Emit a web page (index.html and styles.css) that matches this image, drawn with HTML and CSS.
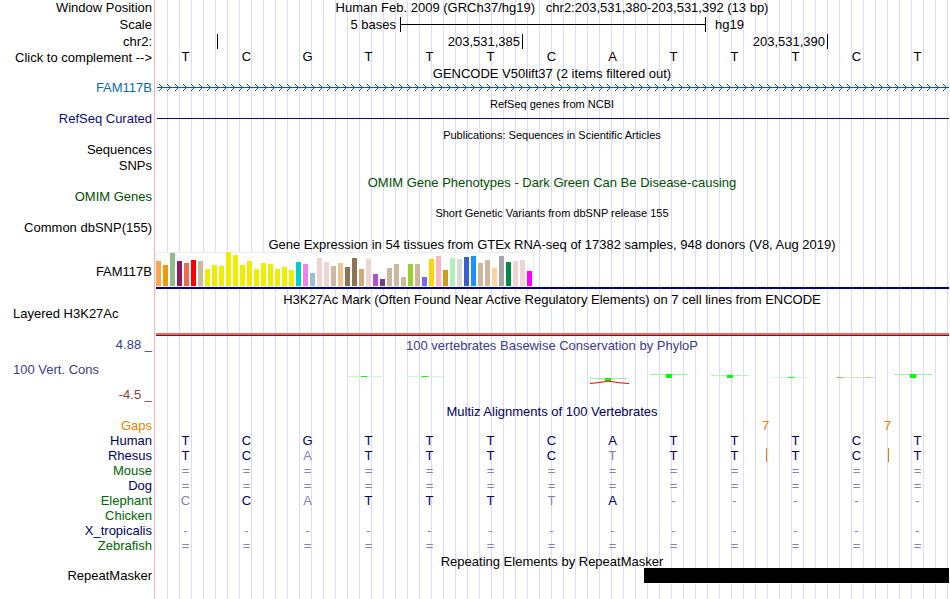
FILE: index.html
```html
<!DOCTYPE html>
<html lang="en">
<head>
<meta charset="utf-8">
<title>chr2:203,531,380-203,531,392</title>
<link rel="stylesheet" href="styles.css">
</head>
<body>
<main class="browser">
  <header>
    <div class="row row-position"><span class="label">Window Position</span><h1 class="title">Human Feb. 2009 (GRCh37/hg19) &nbsp; chr2:203,531,380-203,531,392 (13 bp)</h1></div>
    <div class="row row-scale"><span class="label">Scale</span>
      <div class="ruler"><span class="scale-from">5 bases</span><span class="scale-bar"></span><span class="scale-to">hg19</span></div>
    </div>
    <div class="row row-ruler"><span class="label">chr2:</span>
      <div class="ruler"><span class="tick tick-1"></span><span class="coord coord-5">203,531,385</span><span class="tick tick-5"></span><span class="coord coord-10">203,531,390</span><span class="tick tick-10"></span></div>
    </div>
    <div class="row"><a class="label" href="#complement">Click to complement --&gt;</a>
      <div class="bases"><span>T</span><span>C</span><span>G</span><span>T</span><span>T</span><span>T</span><span>C</span><span>A</span><span>T</span><span>T</span><span>T</span><span>C</span><span>T</span></div>
    </div>
  </header>

  <section>
    <div class="row"><h2 class="title">GENCODE V50lift37 (2 items filtered out)</h2></div>
    <div class="row"><a class="label gencode" href="#gencode">FAM117B</a>
      <svg class="gene" height="15" aria-hidden="true">
        <defs><pattern id="strand" x="0" y="0" width="8" height="15" patternUnits="userSpaceOnUse"><path class="chevron" d="M2 4h1v1h1v1h1v1h1v1h-1v1h-1v1h-1v1h-1v-1h1v-1h1v-1h1v-1h-1v-1h-1v-1h-1z"/></pattern></defs>
        <rect width="100%" height="15" fill="url(#strand)"/>
        <rect class="intron" y="7" width="100%" height="1"/>
      </svg>
    </div>
  </section>

  <section>
    <div class="row"><h2 class="title small">RefSeq genes from NCBI</h2></div>
    <div class="row"><a class="label refseq" href="#refseq">RefSeq Curated</a><div class="refseq-line"></div></div>
  </section>

  <section>
    <div class="row"><h2 class="title small">Publications: Sequences in Scientific Articles</h2></div>
    <div class="row row-spaced"><a class="label" href="#sequences">Sequences</a></div>
    <div class="row"><a class="label" href="#snps">SNPs</a></div>
  </section>

  <section>
    <div class="row"><h2 class="title omim">OMIM Gene Phenotypes - Dark Green Can Be Disease-causing</h2></div>
    <div class="row"><a class="label omim" href="#omim">OMIM Genes</a></div>
  </section>

  <section>
    <div class="row"><h2 class="title small">Short Genetic Variants from dbSNP release 155</h2></div>
    <div class="row"><a class="label" href="#dbsnp">Common dbSNP(155)</a></div>
  </section>

  <section>
    <div class="row"><h2 class="title">Gene Expression in 54 tissues from GTEx RNA-seq of 17382 samples, 948 donors (V8, Aug 2019)</h2></div>
    <div class="row row-gtex"><a class="label" href="#gtex">FAM117B</a>
      <div class="gtex">
        <svg width="378" height="36" role="img" aria-label="Expression by tissue">
          <rect class="frame" x="0.5" y="1.5" width="377" height="34"/>
          <rect x="0" y="10" width="5" height="25" fill="#ffa54f"/><rect x="7" y="14" width="5" height="21" fill="#ee9a00"/><rect x="14" y="2" width="5" height="33" fill="#8fbc8f"/><rect x="21" y="10" width="5" height="25" fill="#8b1c62"/><rect x="28" y="12" width="5" height="23" fill="#ee6a50"/><rect x="35" y="9" width="5" height="26" fill="#ff0000"/><rect x="42" y="10" width="5" height="25" fill="#cdb79e"/>
          <g fill="#eeee00"><rect x="49" y="18" width="5" height="17"/><rect x="56" y="14" width="5" height="21"/><rect x="63" y="15" width="5" height="20"/><rect x="70" y="1" width="5" height="34"/><rect x="77" y="4" width="5" height="31"/><rect x="84" y="14" width="5" height="21"/><rect x="91" y="10" width="5" height="25"/><rect x="98" y="18" width="5" height="17"/><rect x="105" y="12" width="5" height="23"/><rect x="112" y="13" width="5" height="22"/><rect x="119" y="18" width="5" height="17"/><rect x="126" y="16" width="5" height="19"/><rect x="133" y="19" width="5" height="16"/></g>
          <rect x="140" y="11" width="5" height="24" fill="#00cdcd"/><rect x="147" y="13" width="5" height="22" fill="#ee82ee"/><rect x="154" y="22" width="5" height="13" fill="#9ac0cd"/><rect x="161" y="7" width="5" height="28" fill="#eed5d2"/><rect x="168" y="11" width="5" height="24" fill="#eed5d2"/><rect x="175" y="15" width="5" height="20" fill="#cdb79e"/><rect x="182" y="12" width="5" height="23" fill="#eec591"/><rect x="189" y="16" width="5" height="19" fill="#8b7355"/><rect x="196" y="7" width="5" height="28" fill="#8b7355"/><rect x="203" y="18" width="5" height="17" fill="#cdaa7d"/><rect x="210" y="8" width="5" height="27" fill="#eed5d2"/><rect x="217" y="23" width="5" height="12" fill="#b452cd"/><rect x="224" y="28" width="5" height="7" fill="#7a378b"/><rect x="231" y="17" width="5" height="18" fill="#cdb79e"/><rect x="238" y="13" width="5" height="22" fill="#cdb79e"/><rect x="245" y="26" width="5" height="9" fill="#cdb79e"/><rect x="252" y="13" width="5" height="22" fill="#9acd32"/><rect x="259" y="13" width="5" height="22" fill="#cdb79e"/><rect x="266" y="26" width="5" height="9" fill="#7a67ee"/><rect x="273" y="8" width="5" height="27" fill="#ffd700"/><rect x="280" y="5" width="5" height="30" fill="#ffb6c1"/><rect x="287" y="19" width="5" height="16" fill="#cd9b1d"/><rect x="294" y="7" width="5" height="28" fill="#b4eeb4"/><rect x="301" y="8" width="5" height="27" fill="#d9d9d9"/><rect x="308" y="6" width="5" height="29" fill="#3a5fcd"/><rect x="315" y="5" width="5" height="30" fill="#1e90ff"/><rect x="322" y="12" width="5" height="23" fill="#cdb79e"/><rect x="329" y="9" width="5" height="26" fill="#cdb79e"/><rect x="336" y="17" width="5" height="18" fill="#ffd39b"/><rect x="343" y="5" width="5" height="30" fill="#a6a6a6"/><rect x="350" y="11" width="5" height="24" fill="#008b45"/><rect x="357" y="10" width="5" height="25" fill="#eed5d2"/><rect x="364" y="9" width="5" height="26" fill="#eed5d2"/><rect x="371" y="20" width="5" height="15" fill="#ff00ff"/>
        </svg>
      </div>
    </div>
  </section>

  <section>
    <div class="row"><h2 class="title">H3K27Ac Mark (Often Found Near Active Regulatory Elements) on 7 cell lines from ENCODE</h2></div>
    <div class="row row-h3k"><a class="label label-left" href="#h3k27ac">Layered H3K27Ac</a><div class="h3k-signal"></div></div>
  </section>

  <section>
    <div class="row"><span class="label phylop">4.88 _</span><h2 class="title phylop">100 vertebrates Basewise Conservation by PhyloP</h2></div>
    <div class="row row-phylop">
      <div class="label phylop-labels"><a class="phylop label-start" href="#cons">100 Vert. Cons</a><span class="phylop-min">-4.5 _</span></div>
      <svg class="phylop-plot" viewBox="0 -2 794 50" height="50" preserveAspectRatio="none" role="img" aria-label="PhyloP scores">
        <g fill="#d2fad2"><rect x="191" y="22" width="36" height="1"/><rect x="252" y="22" width="36" height="1"/><rect x="617" y="23" width="37" height="1"/></g>
        <g fill="#96fa96"><rect x="435" y="24" width="36" height="1"/><rect x="495" y="20" width="38" height="1"/><rect x="739" y="20" width="38" height="1"/></g>
        <rect x="556" y="21" width="38" height="1" fill="#b4fab4"/>
        <g fill="#00ff00"><rect x="206" y="22" width="6" height="1"/><rect x="267" y="22" width="6" height="1"/><rect x="450" y="24" width="6" height="3"/><rect x="511" y="20" width="6" height="4"/><rect x="572" y="21" width="6" height="3"/><rect x="633" y="23" width="6" height="1"/><rect x="755" y="20" width="6" height="4"/></g>
        <path class="negative" d="M435 29.5L442 28.8L453 27.2L465 28.8L474 29.5"/>
        <rect x="681" y="23" width="38" height="1" fill="#dcdcbe"/><rect x="682" y="23" width="6" height="1" fill="#b4aa50"/><rect x="711" y="23" width="5" height="1" fill="#c8be82"/>
      </svg>
    </div>
  </section>

  <section class="multiz">
    <div class="row"><h2 class="title">Multiz Alignments of 100 Vertebrates</h2></div>
    <table class="alignment">
      <tr class="gaps"><th scope="row">Gaps</th><td></td><td></td><td></td><td></td><td></td><td></td><td></td><td></td><td></td><td></td><td><span class="insert">7</span></td><td></td><td><span class="insert">7</span></td></tr>
      <tr><th scope="row">Human</th><td>T</td><td>C</td><td>G</td><td>T</td><td>T</td><td>T</td><td>C</td><td>A</td><td>T</td><td>T</td><td>T</td><td>C</td><td>T</td></tr>
      <tr><th scope="row">Rhesus</th><td>T</td><td>C</td><td class="diff">A</td><td>T</td><td>T</td><td>T</td><td>C</td><td class="diff">T</td><td>T</td><td>T</td><td><span class="insert-mark"></span>T</td><td>C</td><td><span class="insert-mark"></span>T</td></tr>
      <tr class="green unaligned"><th scope="row">Mouse</th><td>=</td><td>=</td><td>=</td><td>=</td><td>=</td><td>=</td><td>=</td><td>=</td><td>=</td><td>=</td><td>=</td><td>=</td><td>=</td></tr>
      <tr class="unaligned"><th scope="row">Dog</th><td>=</td><td>=</td><td>=</td><td>=</td><td>=</td><td>=</td><td>=</td><td>=</td><td>=</td><td>=</td><td>=</td><td>=</td><td>=</td></tr>
      <tr class="green"><th scope="row">Elephant</th><td class="diff">C</td><td>C</td><td class="diff">A</td><td>T</td><td>T</td><td>T</td><td class="diff">T</td><td>A</td><td class="diff">-</td><td class="diff">-</td><td class="diff">-</td><td class="diff">-</td><td class="diff">-</td></tr>
      <tr class="green"><th scope="row">Chicken</th><td></td><td></td><td></td><td></td><td></td><td></td><td></td><td></td><td></td><td></td><td></td><td></td><td></td></tr>
      <tr class="unaligned"><th scope="row">X_tropicalis</th><td>-</td><td>-</td><td>-</td><td>-</td><td>-</td><td>-</td><td>-</td><td>-</td><td>-</td><td>-</td><td>-</td><td>-</td><td>-</td></tr>
      <tr class="green unaligned"><th scope="row">Zebrafish</th><td>=</td><td>=</td><td>=</td><td>=</td><td>=</td><td>=</td><td>=</td><td>=</td><td>=</td><td>=</td><td>=</td><td>=</td><td>=</td></tr>
    </table>
  </section>

  <section>
    <div class="row"><h2 class="title">Repeating Elements by RepeatMasker</h2></div>
    <div class="row"><a class="label" href="#rmsk">RepeatMasker</a><div class="ruler"><span class="repeat"></span></div></div>
  </section>
</main>
</body>
</html>
```
FILE: styles.css
```css
* { box-sizing: border-box; }

body {
  margin: 0;
  background: #fff;
  color: #000;
  font: 13px/15px "Liberation Sans", Arial, sans-serif;
}

a { color: inherit; text-decoration: none; }

/* Guide lines every 12px, with the pink rule beside the labels */
.browser {
  min-height: 100vh;
  padding-right: 1px;
  background:
    linear-gradient(#ffb0b0, #ffb0b0) 154px 0 / 1px 100% no-repeat,
    repeating-linear-gradient(90deg, #dcdcfa 0 1px, transparent 1px 12px) 167px 0 no-repeat;
}

section { padding-bottom: 1px; }

.row {
  display: grid;
  grid-template-columns: 155px minmax(0, 1fr);
  min-height: 15px;
}

.row-position { min-height: 16px; }
.row-scale { min-height: 18px; padding-top: 1px; align-items: start; }
.row-ruler { min-height: 16px; align-items: start; line-height: 16px; }
.row-spaced { min-height: 16px; }

.label {
  grid-column: 1;
  padding-right: 3px;
  text-align: right;
  white-space: nowrap;
}

.label-left { padding-left: 13px; text-align: left; }

.title {
  grid-column: 2;
  margin: 0;
  font-size: 13px;
  font-weight: normal;
  text-align: center;
  white-space: nowrap;
}

section .title { padding-top: 1px; margin-bottom: -1px; }

.small { font-size: 11px; }

.ruler {
  display: grid;
  grid-template-columns: repeat(13, 1fr);
  grid-template-rows: 15px;
  height: 15px;
  margin-left: 1px;
}

.ruler > * { grid-row: 1; }

.scale-from { grid-column: 1 / 5; padding-right: 4px; text-align: right; }

.scale-bar {
  grid-column: 5 / 10;
  margin-right: -1px;
  border: solid #000;
  border-width: 0 1px;
  background: linear-gradient(#000, #000) center / 100% 1px no-repeat;
}

.scale-to { grid-column: 10; padding-left: 10px; }

.tick { border-left: 1px solid #000; }
.tick-1 { grid-column: 2; }
.tick-5 { grid-column: 7; }
.tick-10 { grid-column: 12; }

.coord { padding-right: 2px; text-align: right; }
.coord-5 { grid-column: 1 / 7; }
.coord-10 { grid-column: 7 / 12; }

.bases {
  display: grid;
  grid-template-columns: repeat(13, 1fr);
  padding-right: 1px;
  line-height: 13px;
  text-align: center;
}

.gencode { color: #0c6caa; }
.gene { display: block; width: calc(100% - 2px); margin-left: 2px; }
.intron, .chevron { fill: #0c5a8c; }

.refseq { color: #0c0c78; }
.refseq-line {
  align-self: center;
  height: 1px;
  margin-left: 2px;
  background: #0c0c78;
}

.omim { color: #005000; }

.row-gtex { min-height: 39px; }
.row-gtex .label { align-self: center; padding-top: 1px; }
.gtex { height: 38px; margin-left: 1px; border-bottom: 2px solid #000080; }
.gtex svg { display: block; }
.frame { fill: #fff; stroke: #eee; }

.row-h3k { min-height: 30px; }
.h3k-signal {
  align-self: end;
  height: 3px;
  margin-left: 1px;
  background: #ff6450;
  border-bottom: 1px solid #641432;
}

.phylop { color: #3c3c8c; }
.phylop-min { color: #8c3c3c; }
.row-phylop { min-height: 50px; }
.phylop-labels {
  display: flex;
  flex-direction: column;
  gap: 10px;
  padding-top: 10px;
}
.label-start { padding-left: 13px; text-align: left; }
.phylop-plot { display: block; width: 100%; }
.negative { fill: none; stroke: #ff0000; stroke-width: 1; }

.multiz { padding-bottom: 0; color: #000064; }

.alignment {
  width: calc(100% - 1px);
  table-layout: fixed;
  border-collapse: collapse;
}

.alignment th {
  width: 155px;
  padding: 0 3px 0 0;
  font-weight: normal;
  text-align: right;
}

.alignment td {
  position: relative;
  height: 15px;
  padding: 0;
  text-align: center;
}

.green th { color: #006400; }
.gaps { color: #e68200; }
.diff, .unaligned td { color: #8282b4; }

.insert { position: absolute; top: 0; left: -3px; }
.insert-mark {
  position: absolute;
  top: 0;
  left: 1px;
  width: 1px;
  height: 14px;
  background: #e68200;
}

.repeat { grid-column: 9 / 14; background: #000; }
```
